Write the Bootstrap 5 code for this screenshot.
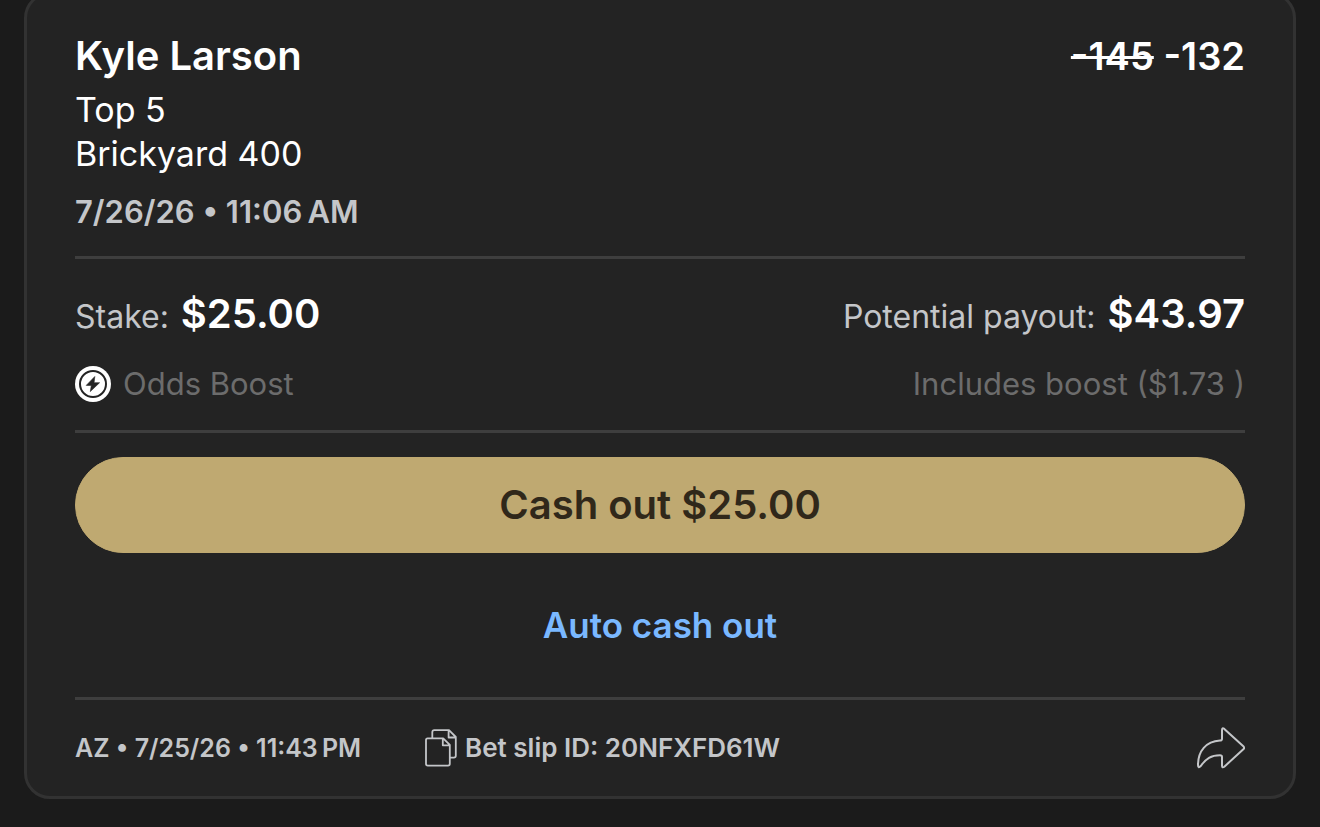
<!DOCTYPE html>
<html lang="en" data-bs-theme="dark">
<head>
<meta charset="utf-8">
<meta name="viewport" content="width=device-width, initial-scale=1">
<title>Bet slip</title>
<link href="https://cdn.jsdelivr.net/npm/bootstrap@5.3.0/dist/css/bootstrap.min.css" rel="stylesheet">
<style>
  body { background: #1b1b1b; color: #fff; font-family: Inter, "Liberation Sans", sans-serif; overflow-x: hidden; }
  .slip { margin: -8px 24px 28px; padding: 33px 48px 24px; background: #232323; border: 3px solid #323232; border-radius: 26px; }
  .slip-title { font-size: 40px; line-height: 56px; font-weight: 600; }
  .slip-odds { font-size: 38px; line-height: 56px; font-weight: 600; }
  .slip-odds s { text-decoration-thickness: 3px; }
  .slip-text { font-size: 34px; line-height: 44px; }
  .slip-label { font-size: 32px; line-height: 44px; }
  .slip-note { font-size: 31px; line-height: 44px; margin: 20px 0 24px; }
  .slip-time { font-size: 31px; line-height: 44px; font-weight: 600; margin: 14px 0 22px; }
  .soft { color: #c4c6c9; }
  .dim { color: #6c6c6c; }
  .rule { height: 3px; margin: 0; border: 0; background: #3e3e3e; opacity: 1; }
  .slip-money { margin-top: 27px; }
  .cash-btn { height: 96px; margin-top: 24px; font-size: 40px; font-weight: 600; --bs-btn-bg: #bfa971; --bs-btn-color: #30281a; --bs-btn-border-color: #bfa971; --bs-btn-hover-bg: #cbb67f; --bs-btn-hover-color: #30281a; }
  .auto-btn { font-size: 35px; line-height: 48px; font-weight: 600; margin: 48px 0; --bs-btn-color: #7ab8ff; --bs-btn-hover-color: #a3cdff; }
  .slip-foot { font-size: 26px; line-height: 48px; font-weight: 600; margin-top: 24px; column-gap: 64px; }
  .slip-placed { font-size: 25px; }
  .copy-btn, .share-btn { font: inherit; color: inherit; }
</style>
</head>
<body>
<main class="slip">
  <div class="d-flex justify-content-between">
    <h1 class="slip-title mb-1">Kyle Larson</h1>
    <div class="slip-odds"><s>-145</s> -132</div>
  </div>
  <div class="slip-text">Top 5</div>
  <div class="slip-text">Brickyard 400</div>
  <div class="slip-time soft">7/26/26 • 11:06&#8239;AM</div>
  <hr class="rule">
  <div class="slip-money d-flex justify-content-between">
    <div class="slip-label d-flex align-items-baseline gap-2"><span class="soft me-1">Stake:</span><span class="slip-title">$25.00</span></div>
    <div class="slip-label d-flex align-items-baseline gap-2"><span class="soft me-1">Potential payout:</span><span class="slip-title">$43.97</span></div>
  </div>
  <div class="slip-note d-flex justify-content-between dim">
    <div class="d-flex align-items-center gap-2">
      <svg width="36" height="36" viewBox="0 0 36 36" aria-hidden="true">
        <circle cx="18" cy="18" r="18" fill="#fff"/>
        <circle cx="18" cy="18" r="13" fill="none" stroke="#232323" stroke-width="2"/>
        <path d="M19.800 10.500 11.200 19.400h5.100l-1 6.200 9.300-8.900h-5.500z" fill="#232323" stroke="#232323" stroke-width=".6" stroke-linejoin="round"/>
      </svg>
      <span class="ms-1">Odds Boost</span>
    </div>
    <div>Includes boost ($1.73 )</div>
  </div>
  <hr class="rule">
  <button type="button" class="btn cash-btn w-100 rounded-pill">Cash out $25.00</button>
  <div class="text-center"><button type="button" class="btn auto-btn border-0 p-0">Auto cash out</button></div>
  <hr class="rule">
  <div class="slip-foot soft d-flex align-items-center">
    <div class="slip-placed">AZ • 7/25/26 • 11:43&#8239;PM</div>
    <button type="button" class="copy-btn btn border-0 p-0 d-flex align-items-center gap-2">
      <svg width="32" height="38" viewBox="0 0 32 38" fill="none" stroke="currentColor" stroke-width="1.800" stroke-linejoin="round" aria-hidden="true">
        <path d="M7.300 9V3.200Q7.300 1.200 9.300 1.200H24L30.800 8V26.800Q30.800 28.600 28.800 28.600H25M23.600 1.300V8.500H30.700"/>
        <path d="M1 10.900Q1 9.300 2.600 9.300H18.200L24.800 15.900V34.800Q24.800 36.600 23 36.600H2.800Q1 36.600 1 34.800ZM17.800 9.500V16.300H24.700"/>
      </svg>
      <span>Bet slip ID: 20NFXFD61W</span>
    </button>
    <button type="button" class="share-btn btn border-0 p-0 ms-auto d-flex" aria-label="Share">
      <svg width="48" height="42" viewBox="0 0 48 42" fill="none" stroke="currentColor" stroke-width="2" stroke-linejoin="round" aria-hidden="true">
        <path d="M25 3.200Q25 .2 27.300 1.900L46.600 19.600Q47.700 20.800 46.600 22L27.300 39.700Q25 41.400 25 38.500V30Q25 28.200 23 28.200C14 28.200 9 31.500 4 38.800Q1 42 1 38C1 24 9 14.500 23 13.600Q25 13.500 25 11.700Z"/>
      </svg>
    </button>
  </div>
</main>
<script src="https://cdn.jsdelivr.net/npm/bootstrap@5.3.0/dist/js/bootstrap.bundle.min.js"></script>
</body>
</html>
